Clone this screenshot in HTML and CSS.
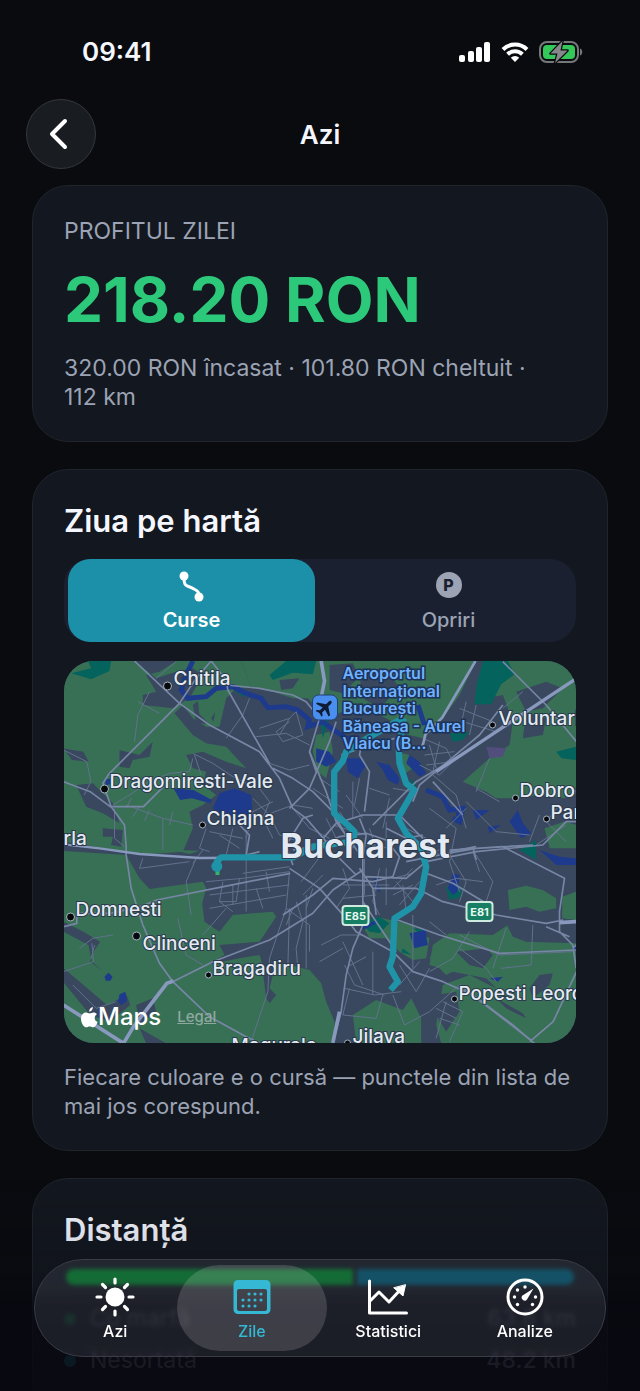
FILE: index.html
```html
<!DOCTYPE html>
<html lang="ro">
<head>
    <meta charset="UTF-8">
    <meta name="viewport" content="width=device-width, initial-scale=1.0">
    <title>Azi</title>
    <link rel="stylesheet" href="styles.css">
</head>
<body>

<!-- Status bar -->
<div class="status-bar">
    <span class="time">09:41</span>
    <div class="status-icons">
        <svg width="32" height="20" viewBox="0 0 32 20" fill="#fff">
            <rect x="0" y="13" width="6" height="7" rx="2"/>
            <rect x="9" y="9" width="6" height="11" rx="2"/>
            <rect x="17" y="5" width="6" height="15" rx="2"/>
            <rect x="25" y="0" width="6" height="20" rx="2"/>
        </svg>
        <svg width="28" height="20" viewBox="0 0 28 20" fill="none" stroke="#fff" stroke-width="4">
            <path d="M2 7.5a17 17 0 0 1 24 0"/>
            <path d="M6.6 12.3a10.6 10.6 0 0 1 14.8 0"/>
            <path d="M14 20l-4.200-4.200a6 6 0 0 1 8.400 0z" fill="#fff" stroke="none"/>
        </svg>
        <svg width="44" height="22" viewBox="0 0 44 22">
            <rect x="1" y="1" width="38" height="20" rx="7" fill="none" stroke="#75777b" stroke-width="2"/>
            <path d="M41 7.500c3 1 3 6 0 7z" fill="#75777b"/>
            <rect x="4" y="4" width="32" height="14" rx="4" fill="#34c759"/>
            <path d="M23.500 0L11.500 12.500h7L16 22l12.500-12.500h-7z" fill="#85878b" stroke="#090b0f" stroke-width="2.500" stroke-linejoin="round" paint-order="stroke"/>
        </svg>
    </div>
</div>

<!-- Navigation bar -->
<header class="nav-bar">
    <button class="back-button" type="button" aria-label="Înapoi">
        <svg width="20" height="32" viewBox="0 0 20 32" fill="none" stroke="#fff" stroke-width="4" stroke-linecap="round" stroke-linejoin="round"><path d="M16 3L3 16l13 13"/></svg>
    </button>
    <h1>Azi</h1>
</header>

<main class="content">
    <section class="card">
        <p class="label">PROFITUL ZILEI</p>
        <p class="profit">218.20 RON</p>
        <p class="note">320.00 RON încasat · 101.80 RON cheltuit · 112&nbsp;km</p>
    </section>

    <section class="card">
        <h2>Ziua pe hartă</h2>
        <div class="segments">
            <button class="segment active" type="button">
                <svg width="28" height="32" viewBox="0 0 28 32" fill="none" stroke="#fff" stroke-width="3">
                    <path d="M6 8c0 10 4 7 10 11 4 2 5 3 5 8"/>
                    <circle cx="6" cy="6" r="4.500" fill="#fff" stroke="none"/>
                    <circle cx="21" cy="27" r="4.500" fill="#fff" stroke="none"/>
                </svg>
                <span>Curse</span>
            </button>
            <button class="segment" type="button">
                <span class="parking">P</span>
                <span>Opriri</span>
            </button>
        </div>

        <div class="map">
            <svg viewBox="0 0 513 382" preserveAspectRatio="xMidYMid slice">
                <rect width="513" height="382" fill="#39485e"/>
                <g transform="translate(-4 -6) scale(0.33333)">
                    <!-- Green areas -->
                    <g fill="#387056">
                        <path d="M12 18H545L575 95 530 100 500 130 480 215 440 215 400 190 370 150 345 175 400 240 440 265 500 275 560 340 500 320 430 290 380 300 400 340 440 350 430 390 470 420 430 450 390 470 400 520 370 590 240 600 200 590 12 560z"/>
                        <path d="M12 588L200 600 240 670 270 702 430 680 440 700 428 745 435 800 480 830 520 780 640 770 650 785 600 860 480 870 495 900 440 930 540 910 600 900 620 960 650 920 750 945 785 985 800 1040 825 1100V1164H12z"/>
                        <path d="M545 18H1250L1200 120 1150 190 1090 250 1010 230 1000 200 900 150 800 190 745 130 700 130 640 110 575 95z"/>
                        <path d="M1340 18H1551V420L1510 430 1440 420 1380 430 1310 430 1280 410 1210 380 1290 310 1350 270 1360 200 1330 120 1280 130 1290 60z"/>
                        <path d="M1120 870L1170 835 1300 840 1345 810 1400 860 1551 865V1164H1145L1130 1110 1150 990 1230 960 1310 1000 1280 970 1180 950 1110 930z"/>
                        <path d="M1345 705L1400 692 1450 705 1490 730 1490 760 1440 770 1400 755 1350 765z"/>
                        <path d="M1508 725l43-15v85l-43-5zM890 1164L880 1080 950 1035 1030 1065 1055 1030 1085 1090 1085 1164z"/>
                        <path d="M900 795L970 790 1060 810 1080 835 1110 850 1100 910 1060 915 1020 890 980 850 930 850zM1140 855l50-20 40 40-20 60-50 25-50-50z"/>
                        <path d="M770 240l40-10 10 60-20 80-25-20-15-60zM1010 290l40 10 10 40-30 20zM1455 520l60-20 36 10v70h-80z"/>
                        <path d="M340 585l80 2-30 10zM630 778l20 5-10 6z"/>
                    </g>
                    <!-- Built-up areas on top of green -->
                    <g fill="#39485e">
                        <path d="M225 18H350L300 50 260 60 290 110 250 120 250 150 340 160 390 130 430 60 400 40 350 50 290 70z"/>
                        <path d="M12 280l60 10 15 30-50-5zM50 390l50-5 60 60 20 60-50-30-50-20zM180 285l60 15 40-40-10 45-50 10-10 25-30-5zM130 520l60 5-5 50-30-5 5-25h-30z"/>
                        <path d="M400 150l15-12 5 40 30 30-40-5zM455 190l12-20-5 30zM660 75l60-5-20 30-35 5z"/>
                        <path d="M12 800l60 30 50 30-20 30-10 30 40 30-35-30-10-50-75-40zM12 940l60 50 70 60 60-30 10 30-60 50-60-20-90-110zM230 1050l50-20 10 40-50 40zM605 910l25-30 20 40-20 80 20 20-20 25-10-15z"/>
                        <path d="M240 1120l80 45h-60zM630 910l120-20v50l-60-10z"/>
                        <path d="M810 30l70-5 20 40-50 50-40-10zM900 60l80-20 40 60-60 60-50-30z"/>
                        <path d="M1190 890l90-10 20 20-30 40-40-10zM1340 805l100-10 20 30-60 35-40-15zM1440 960l40-5-10 35-50 40-10-30zM1310 1030l80 45 10 15-60-30zM1130 1020l60-10 10 60-40 60-30-50z"/>
                        <path d="M1370 110l90-30 50 20-60 60-50 10zM1400 170l60 20-10 50-60 10z"/>
                    </g>
                    <g fill="#05635d">
                        <path d="M35 55l60-15-10-22h70l-5 30-55 25zM630 60l50-42h90l-10 40-60-5-60 22zM1250 95l20-77h75l20 40-40 30-30 60h-50zM525 95l35 10-5 22-25-15zM1170 235l60-5-20 25-30 5zM1490 290l61-15v40l-45-5zM1050 370l20 15-5 20zM1160 700l20-25 25 20v30l-35 10zM900 800l60-15 30 20-30 30-30-5zM1030 880l25 20-30-8zM1060 820l40 5v25zM1380 585l50-30v60zM780 180l30 10-20 60z"/>
                    </g>
                    <path d="M1280 275l60 5-10 25-40 5z" fill="#514d7c"/>
                    <!-- Water -->
                    <g fill="#1e3a8c">
                        <path d="M480 415l45-15 50 20 5 70-15 25-45-15-60-40zM342 400l60 5 55 30-5 10-55-15-35 5zM138 372l20 0 0 14-20 5z" />
                        <path d="M135 965l12-12 12 12-6 12h-14zM180 1018l18-8 4 28-16 12-10-10z"/>
                        <path d="M1100 845l0-20-50 10 15 45 40-10zM1180 655l20 5-5 50-15 10-15-20zM1290 970l40-5-15 15zM1440 585l60 20 51 5v20h-60zM1350 500l25-35 15 40 25 30-30 15zM1535 880l16-5v15z"/>
                        <path d="M770 280l40 10 20 30-30 15-30-15zM860 310l40 0 20 20-25 40-30-20zM950 320l40 10 30 40-5 20-30-15-15-30zM1050 300l30 20 20 35-20 10-40-40zM1240 465l50 0-40 30zM1285 515l40-5-35 25z"/>
                    </g>
                    <g fill="none" stroke="#1e3a8c" stroke-width="15">
                        <path d="M400 18L375 70 365 105 385 130 440 125 470 100 520 95 560 115 605 130 625 158 680 155 715 165 750 195 745 215 790 200 830 230 860 250 900 250M1075 150l20 60M1100 405l50 20 20 40 40-5-10 40-20-10M1205 500l-10-30"/>
                        <path d="M945 670l15 40" stroke-width="6"/>
                        <path d="M910 820l40-20" stroke-width="10"/>
                    </g>
                    <!-- Small streets -->
                    <g fill="none" stroke="#62718d" stroke-width="3">
                        <path d="M270 110L235 180 225 260M235 140L300 175M290 70l60-50M12 285l70 35 12 60-20 40M165 460v90l30 25M200 450l110 40 90 20M215 430l-15 30M310 490v95M240 455l-20 30M270 465l-15 32M340 470l-10 40"/>
                        <path d="M500 250l50-70 20-50M600 220l90-30 20-20 20 70-60 20-20-30 40-30M590 245l90-10 70 35M660 240l30-50M630 325l60 20 60-15M400 295l60 30 60 40 60 30M400 310l-10 40-60 5-60 25-60 40-50 30M405 300l20 60"/>
                        <path d="M580 430l50 50 30 60 60 20M620 480l80-30 60 10M600 400l30 40-20 50 30 60M640 440l-60 30-20 80M700 460l50 60 60 30M480 540l60 40M440 520l-20 60 30 10M520 520l-20 80M450 530l100 20M560 520v250M550 655l140-20M440 680l110-10 140-20M450 720l240-30M450 760l230-40M490 680l-10 60 40 30M520 690v60M540 670l-10 70-50 0M590 700l20 60M620 650l10 60M380 680l15 100M355 790l25 110 50 30M410 610l-30 70M250 610l-10 30 150-20M430 585l-30 40M500 760l-70 80"/>
                        <path d="M690 650l-10 110-50 150-5 100-50 150M690 760l-5 180M710 740l20 60-20 80 5 60M740 720v220M680 760l70 50 0 80M700 760l-20 50M785 600l-60 80M760 700l-20 60M790 660l-60 60"/>
                        <path d="M850 640l20 60-40 60M915 610v110M850 690h140M850 730l100-10M960 640l-20 100 20 40M980 640v110M1010 680l50 60M1000 720l60-30M1020 750l60-70M1030 690l10 80M1000 670l60-15M1060 640l-60 60M1080 600l80-20M1090 550l50 50M1040 520l80 40"/>
                        <path d="M820 510l100 30M840 470l60 90M930 520l20 60M980 500v80M860 560l130 20M800 490l40 80M860 420l50 70M880 380v110M930 400l60 20M990 430l-20 90M1000 400l60 10M760 400l90 60M780 370l60 40M900 370l-15 80"/>
                        <path d="M1090 250l70 30 20 40-40 40-60-30M1110 270l20 70M1140 260l-20 90M1095 300l90-10M1100 330l80-10M1200 160l100 40M1220 140l-20 90M1250 150l-20 90M1210 200l100 30 60-60M1330 160l60-50M1120 360l70 60 30 100M1290 310l-40 100M1250 400l70 40M1220 440l90 90 100 10M1160 520l60-60M1110 460l80 60M1190 520l-20 100 30 90M1170 600l50 80-20 60M1130 690l60-20 80 10M1250 600l50 80-20 60M1240 590l20 60"/>
                        <path d="M1430 570l90-60M1440 480l-30 80M1500 450l-40 50 60 60"/>
                        <path d="M785 870l60-30 60 0M780 920l70-40M850 860l60 130M865 935l55-30M870 1000l-20 80 100 10 20-70M855 930l30 60 90 30M940 890v130M855 1000l90 20 80-10M1000 1020l35 90 75-40 90-80M1060 780v160M1020 930l50 80 40-70M1110 800l50 40M1230 830l-50 80-70 40M1200 880l80 60 30 40M1200 840l120 60 220-10M1420 810l-5 120-90 10M1340 820l-40 120M1150 1040l60 30-40 90M1130 1060l60 30M1140 1090l60 20M1160 1040l-30 110M1080 920l-60 70"/>
                        <path d="M60 880l40-30 60-10M105 870l-10 40M12 950l90-30-5-55M40 990l70 70 60-20"/>
                    </g>
                    <!-- Main roads -->
                    <g fill="none" stroke="#7886a5" stroke-width="5" stroke-linejoin="round">
                        <path d="M455 18L410 70 360 145 150 355 130 385 155 455 195 510 200 575 200 600 215 700 250 810 300 925 340 980 450 1085 560 1145 600 1164"/>
                        <path d="M225 18L360 145 450 210 600 290 660 370 700 460 740 490 800 560M455 18L500 75 505 105 630 325M500 90L600 100 700 120 740 140 780 190 750 290 770 350M12 380l80 30 60 45 100 0 60-60M12 815l40-10v-30l100 0 90-20 50-20 200-40 200-40M340 980l120-60 170-65 130-80 60-70 90-60M560 600l10-60-30-30M560 600l40-10"/>
                        <path d="M690 640l90 60 80 90 30 40 110 60 60 60 90 30 90 40 120 90 70 60"/>
                        <path d="M910 610l0 200-30 70-20 80-15 110-20 75M700 585l60-10 80-30 80-10 60 20 40 50-20 60-60 15-120-10-60 50-90 60M760 585l70-80 80-25 110 0 70 70"/>
                        <path d="M640 340l60 30 60 40 60 60 60 110M690 460l60-60 60-140 20-60M750 290l50 120 30 90 80 110M700 630l-20-60 50-80 30-10"/>
                        <path d="M900 490l20 50-10 70M910 250l-10 50 30 50-15 120M845 300l60-20 100-30M940 510l130-130 150-90"/>
                        <path d="M920 665l120 5 60-50 150-30 200-20 70-70 31 0M1040 620l100-20 110-20 170-10M940 700l130 0 80 40 160 40 150 25 51-10M1000 790l140 50 180 55 231-10M910 740l100 150M1100 655l80 30 100 60M900 640l40 60 10 80M830 600l60 60M1170 585l160-10 185 95-15 100 0 60 40 40 10 70M1540 880l15-15M1460 815l70 30M1200 990l220 170M1551 950l-70 150-70 60M1240 575l10 40M980 520l60 30 50-10M1120 380l90 100"/>
                        <path d="M1330 20l130 130 91 110M1330 150l-70 90-180 150-20 50M1170 590l80-15"/>
                    </g>
                    <!-- Motorways -->
                    <g fill="none" stroke="#8998bd" stroke-width="11">
                        <path d="M12 568L120 580 240 597 420 609 690 608" stroke-width="7"/>
                        <path d="M785 18l10 60-10 50" />
                        <path d="M1248 18l-100 170-50 50-10 40" stroke-width="8"/>
                        <path d="M1551 70L1235 280 1130 350" stroke-width="10"/>
                        <path d="M12 1050l180 115 30-50 100-130 20-7M840 1070l-20 94M1500 803l51-3"/>
                    </g>
                    <!-- Routes -->
                    <g fill="none" stroke="#1f94a9" stroke-width="19" stroke-linejoin="round">
                        <path d="M474 645v15" stroke="#35b56c" stroke-width="12"/>
                        <circle cx="472" cy="634" r="7"/>
                        <path d="M470 638L472 620 485 607 700 607 760 575 880 560 885 530 870 515 824 475V350L850 318 860 290 940 240 1030 190"/>
                        <path d="M1032 190L1018 290 1020 325 1040 385 1064 405 1015 490 1040 535 1085 580 1100 635 1085 715 1060 755 1005 790 1000 905 990 935 1015 980 993 1005"/>
                    </g>
                </g>

                <!-- Places -->
                <g fill="#06080c" stroke="#aab3c2" stroke-width="1">
                    <circle cx="104" cy="25" r="4"/>
                    <circle cx="41" cy="128" r="4"/>
                    <circle cx="139" cy="164" r="3"/>
                    <circle cx="7" cy="256" r="4"/>
                    <circle cx="73" cy="275" r="4"/>
                    <circle cx="145" cy="314" r="3"/>
                    <circle cx="429" cy="64" r="3"/>
                    <circle cx="452" cy="137" r="3"/>
                    <circle cx="483" cy="158" r="3"/>
                    <circle cx="391" cy="338" r="3"/>
                    <circle cx="284" cy="382" r="3"/>
                </g>
                <g class="place">
                    <text x="110" y="24">Chitila</text>
                    <text x="46" y="127">Dragomiresti-Vale</text>
                    <text x="143" y="164">Chiajna</text>
                    <text x="0" y="184">rla</text>
                    <text x="12" y="255">Domnesti</text>
                    <text x="79" y="289">Clinceni</text>
                    <text x="149" y="314">Bragadiru</text>
                    <text x="435" y="64">Voluntari</text>
                    <text x="456" y="136">Dobroești</text>
                    <text x="487" y="158">Pantelimon</text>
                    <text x="395" y="339">Popesti Leordeni</text>
                    <text x="289" y="382">Jilava</text>
                    <text x="168" y="391">Magurele</text>
                </g>
                <text class="city" x="217" y="197">Bucharest</text>
                <g class="airport">
                    <text x="279" y="18">Aeroportul</text>
                    <text x="279" y="36">Internațional</text>
                    <text x="279" y="53">București</text>
                    <text x="279" y="71">Băneasa - Aurel</text>
                    <text x="279" y="88">Vlaicu (B…</text>
                </g>
                <rect x="249" y="34" width="25" height="25" rx="6" fill="#4a8ff0" stroke="#22406f" stroke-width="1"/>
                <path transform="translate(261.500 46.500) rotate(45)" fill="#0f1c33" d="M0-9c1.200 0 1.600 1.500 1.600 3v3L9 1.800v2L1.600 1.600v4l2.600 2V9L0 7.900-4.200 9V7.600l2.600-2v-4L-9 3.800v-2L-1.600-3v-3C-1.600-7.500-1.200-9 0-9z"/>
                <g fill="#178064" stroke="#cfeade" stroke-width="2">
                    <rect x="279" y="245" width="26" height="19" rx="3"/>
                    <rect x="403" y="241" width="26" height="19" rx="3"/>
                </g>
                <g class="road-sign">
                    <text x="292" y="259">E85</text>
                    <text x="416" y="255">E81</text>
                </g>
            </svg>
            <div class="map-credit">
                <svg width="17" height="21" viewBox="0 0 17 21" fill="#fff"><path d="M11.900 0c.2 2.300-1.500 4.600-3.700 4.700C7.900 2.500 9.800.3 11.900 0zM15.900 7.200c-3.300 2-2.800 6.400.7 7.800-.8 2.300-2.500 5.300-4.400 5.300-1.300 0-1.900-.8-3.500-.8s-2.200.8-3.500.8C2.600 20.300 0 15.700 0 11.700 0 7.800 2.500 5.600 5 5.600c1.500 0 2.700.9 3.600.9.900 0 2.300-1 4-1 1.300 0 2.600.7 3.300 1.700z"/></svg>
                <span class="brand">Maps</span>
                <a href="#legal">Legal</a>
            </div>
        </div>
        <p class="note small">Fiecare culoare e o cursă — punctele din lista de mai jos corespund.</p>
    </section>

    <section class="card">
        <h2>Distanță</h2>
        <div class="distance-bar">
            <span class="loaded" style="flex-grow: 57"></span>
            <span class="empty" style="flex-grow: 43"></span>
        </div>
        <ul class="legend">
            <li><i class="dot green"></i>Cu marfă<b>63.8 km</b></li>
            <li><i class="dot teal"></i>Nesortată<b>48.2 km</b></li>
        </ul>
    </section>
</main>

<div class="fade"></div>

<!-- Tab bar -->
<nav class="tab-bar">
    <a href="#azi">
        <svg width="40" height="40" viewBox="0 0 40 40" fill="none" stroke="#fff" stroke-width="3.200" stroke-linecap="round">
            <circle cx="20" cy="20" r="9.500" fill="#fff" stroke="none"/>
            <path d="M20 2v4M20 34v4M2 20h4M34 20h4M7.500 7.500l3 3M29.500 29.500l3 3M7.500 32.500l3-3M29.500 10.500l3-3"/>
        </svg>
        <span>Azi</span>
    </a>
    <a href="#zile" class="active">
        <svg width="40" height="40" viewBox="0 0 40 40" fill="#35b8d4">
            <path fill-rule="evenodd" d="M6 3h28a4.500 4.500 0 0 1 4.500 4.500v25A4.500 4.500 0 0 1 34 37H6a4.500 4.500 0 0 1-4.500-4.500v-25A4.500 4.500 0 0 1 6 3zM7 12a2 2 0 0 0-2 2v17.500A2.500 2.500 0 0 0 7.500 34h25a2.500 2.500 0 0 0 2.500-2.500V14a2 2 0 0 0-2-2z"/>
            <circle cx="17" cy="17" r="1.600"/><circle cx="23" cy="17" r="1.600"/><circle cx="29" cy="17" r="1.600"/>
            <circle cx="11" cy="23" r="1.600"/><circle cx="17" cy="23" r="1.600"/><circle cx="23" cy="23" r="1.600"/><circle cx="29" cy="23" r="1.600"/>
            <circle cx="11" cy="29" r="1.600"/><circle cx="17" cy="29" r="1.600"/><circle cx="23" cy="29" r="1.600"/>
        </svg>
        <span>Zile</span>
    </a>
    <a href="#statistici">
        <svg width="40" height="40" viewBox="0 0 40 40" fill="none" stroke="#fff" stroke-width="3" stroke-linecap="round" stroke-linejoin="round">
            <path d="M1.500 4v32h37"/>
            <path d="M2 24l9-9 10 10 12-13"/>
            <path d="M37.500 8l-2.500 11-9-8z" fill="#fff" stroke-width="1"/>
        </svg>
        <span>Statistici</span>
    </a>
    <a href="#analize">
        <svg width="40" height="40" viewBox="0 0 40 40" fill="#fff">
            <circle cx="20" cy="20" r="17" fill="none" stroke="#fff" stroke-width="3"/>
            <circle cx="20" cy="10" r="1.700"/><circle cx="12.500" cy="13" r="1.700"/><circle cx="9.500" cy="20" r="1.700"/>
            <circle cx="30.500" cy="20" r="1.700"/><circle cx="12.500" cy="27.500" r="1.700"/><circle cx="27.500" cy="27.500" r="1.700"/>
            <path d="M28.500 11.500L22 22.500a3 3 0 1 1-4.500-4z"/>
        </svg>
        <span>Analize</span>
    </a>
</nav>

</body>
</html>
```
FILE: styles.css
```css
* {
    box-sizing: border-box;
    margin: 0;
    padding: 0;
}

body {
    height: 100vh;
    overflow: hidden;
    background-color: #090b0f;
    font-family: Inter, "Liberation Sans", sans-serif;
    color: #f5f7ff;
}

svg {
    display: block;
    flex-shrink: 0;
}

/* Status bar */
.status-bar {
    display: flex;
    justify-content: space-between;
    align-items: center;
    height: 99px;
    padding: 8px 57px 4px 82px;
}

.time {
    font-size: 26px;
    font-weight: 600;
}

.status-icons {
    display: flex;
    align-items: center;
    gap: 10px;
}

/* Navigation bar */
.nav-bar {
    display: grid;
    grid-template-columns: 70px 1fr 70px;
    align-items: center;
    padding: 0 26px;
}

.nav-bar h1 {
    font-size: 26px;
    font-weight: 600;
    text-align: center;
}

.back-button {
    display: flex;
    align-items: center;
    justify-content: center;
    width: 70px;
    height: 70px;
    padding-right: 5px;
    background-color: #191c21;
    border: 1px solid #34373d;
    border-radius: 50%;
    cursor: pointer;
}

/* Cards */
.content {
    display: flex;
    flex-direction: column;
    gap: 27px;
    padding: 16px 32px;
}

.card {
    padding: 31px 31px 29px;
    background-color: #13171f;
    border: 1px solid #20242c;
    border-radius: 36px;
}

.label,
.note {
    font-size: 23px;
    line-height: 29px;
    color: #9ba3b4;
}

.note.small {
    font-size: 22px;
}

.profit {
    margin: 16px 0;
    font-size: 62px;
    font-weight: 700;
    line-height: 76px;
    color: #2dc97a;
}

h2 {
    font-size: 31px;
    font-weight: 600;
    line-height: 40px;
}

/* Segmented control */
.segments {
    display: flex;
    gap: 10px;
    margin: 18px 0 19px;
    padding: 0 4px;
    background-color: #1a2030;
    border-radius: 26px;
}

.segment {
    flex: 1;
    display: flex;
    flex-direction: column;
    align-items: center;
    justify-content: space-between;
    height: 83px;
    padding: 11px 0 8px;
    background: none;
    border: none;
    border-radius: 22px;
    font-family: inherit;
    font-size: 20px;
    font-weight: 500;
    line-height: 28px;
    color: #9ba3b4;
    cursor: pointer;
}

.segment.active {
    background-color: #1c90a8;
    font-weight: 600;
    color: #fff;
}

.parking {
    width: 26px;
    height: 26px;
    margin-top: 2px;
    background-color: #9ba3b4;
    border-radius: 50%;
    font-size: 16px;
    font-weight: 800;
    line-height: 26px;
    color: #1a2030;
}

/* Map */
.map {
    position: relative;
    margin-bottom: 20px;
    aspect-ratio: 512 / 382;
    border-radius: 30px;
    overflow: hidden;
}

.map > svg {
    width: 100%;
    height: 100%;
}

.place,
.city,
.airport {
    font-size: 19px;
    font-weight: 500;
    fill: #e4eaf3;
    stroke: #2b3a4c;
    stroke-width: 2px;
    paint-order: stroke;
}

.city {
    font-size: 34px;
    font-weight: 700;
}

.airport {
    font-size: 16px;
    font-weight: 600;
    fill: #6fb1ff;
    stroke: #1d3357;
    stroke-width: 3px;
}

.road-sign {
    font-size: 11px;
    font-weight: 700;
    fill: #eafaf3;
    text-anchor: middle;
}

.map-credit {
    position: absolute;
    left: 17px;
    bottom: 11px;
    display: flex;
    align-items: center;
    font-size: 24px;
    font-weight: 500;
    line-height: 30px;
    color: #fff;
}

.map-credit a {
    margin-left: 16px;
    font-size: 15px;
    color: #90a89f;
}

/* Distance */
.distance-bar {
    display: flex;
    gap: 4px;
    height: 16px;
    margin: 19px 0;
    padding: 0 2px;
}

.loaded {
    background-color: #007426;
    border-radius: 8px 0 0 8px;
}

.empty {
    background-color: #005068;
    border-radius: 0 8px 8px 0;
}

.legend {
    list-style: none;
    font-size: 23px;
    line-height: 29px;
    opacity: 0.7;
}

.legend li {
    display: flex;
    align-items: center;
    margin-bottom: 13px;
    color: #9ba3b4;
}

.legend b {
    margin-left: auto;
    font-weight: 500;
}

.dot {
    width: 12px;
    height: 12px;
    margin-right: 14px;
    border-radius: 50%;
}

.dot.green {
    background-color: #00b050;
}

.dot.teal {
    background-color: #1c90a8;
}

/* Content fades out behind the tab bar */
.fade {
    position: fixed;
    left: 0;
    right: 0;
    bottom: 0;
    height: 210px;
    background: linear-gradient(rgba(8, 8, 16, 0), rgba(8, 8, 16, 0.2) 50%, rgba(8, 8, 16, 0.8) 60%, rgba(8, 8, 16, 0.85));
}

/* Tab bar */
.tab-bar {
    position: fixed;
    left: 34px;
    right: 34px;
    bottom: 34px;
    display: grid;
    grid-template-columns: repeat(4, 1fr);
    height: 98px;
    padding: 5px 12px;
    background-color: rgba(225, 230, 255, 0.09);
    border: 1px solid #3a3d47;
    border-radius: 49px;
    backdrop-filter: blur(2px);
}

.tab-bar a {
    display: flex;
    flex-direction: column;
    align-items: center;
    margin: 0 -7px;
    padding-top: 12px;
    border-radius: 43px;
    font-size: 16px;
    font-weight: 500;
    line-height: 28px;
    color: #fff;
    text-decoration: none;
}

.tab-bar a.active {
    background-color: rgba(255, 255, 255, 0.15);
    color: #35b8d4;
}
```
